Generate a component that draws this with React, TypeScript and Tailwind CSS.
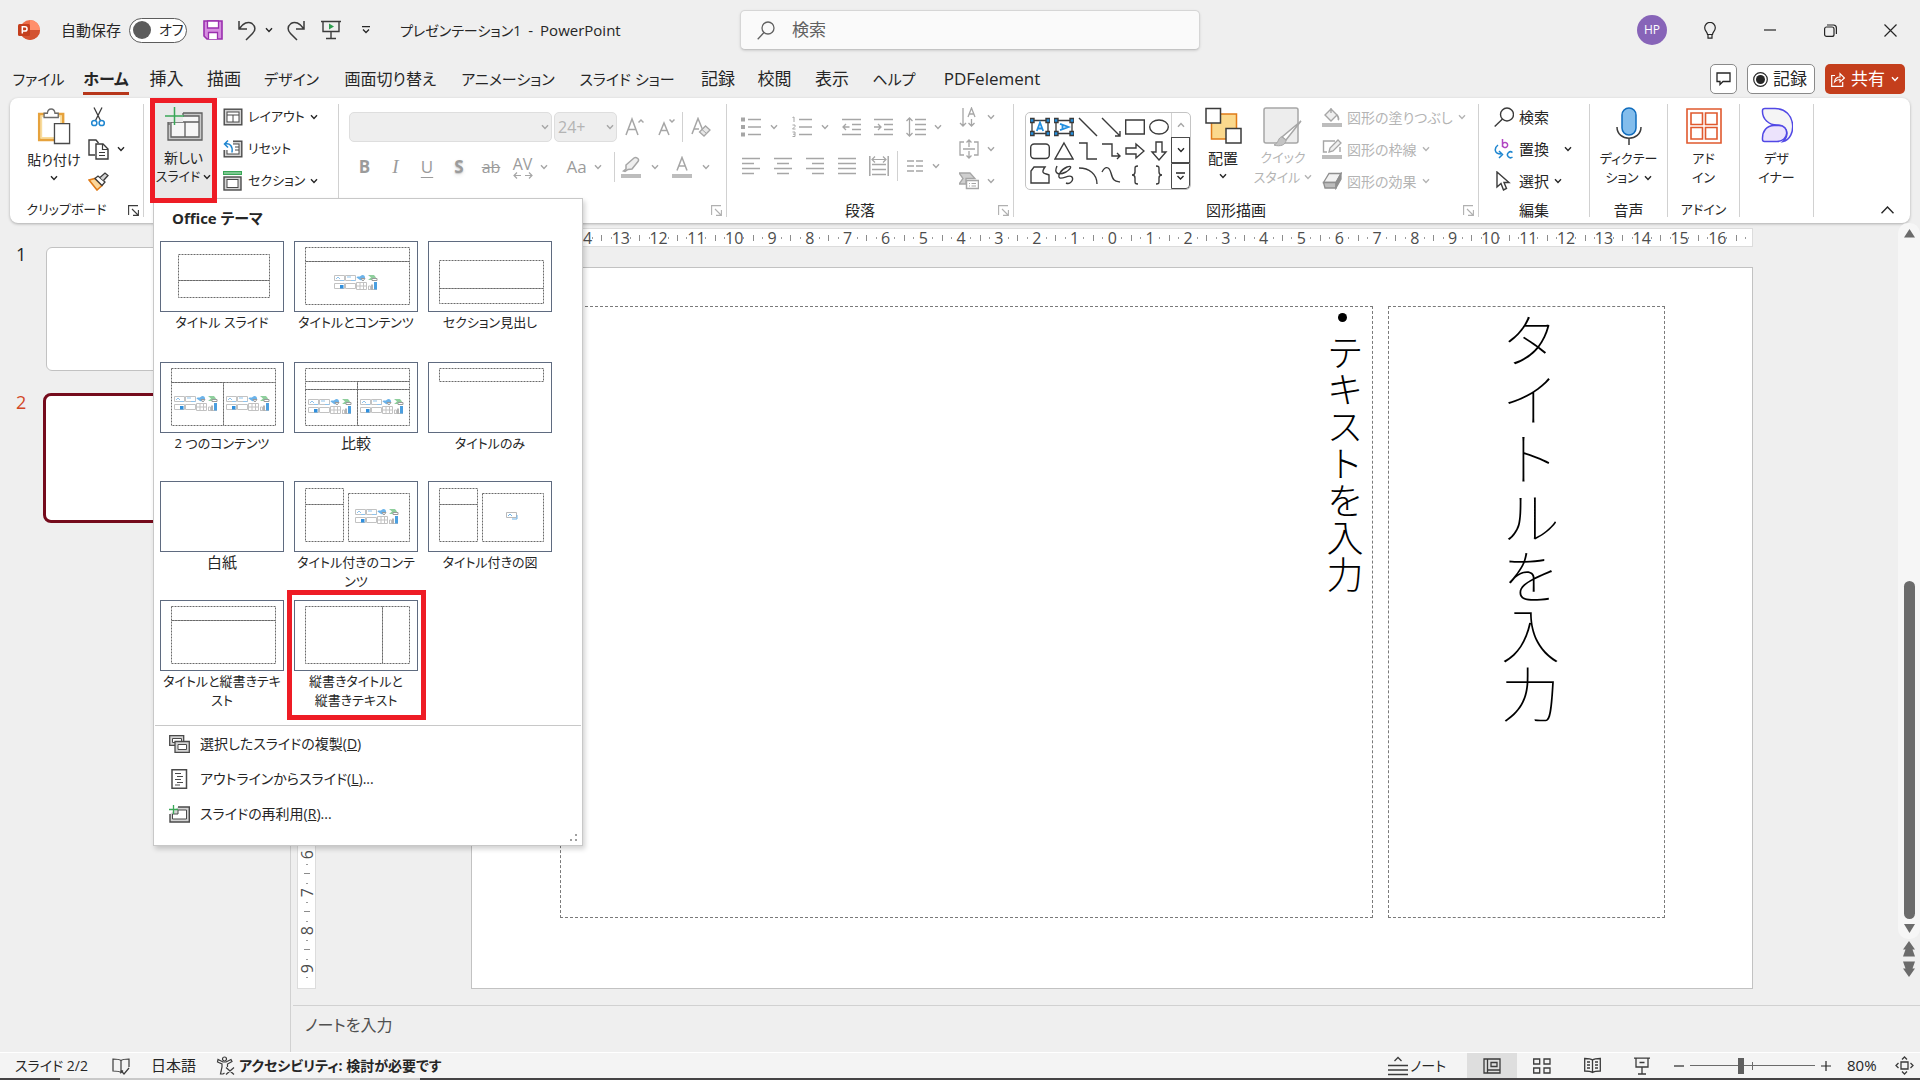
import React from "react";

type Kids = { children?: React.ReactNode };

const ink = "#3b3b3b";
const dim = "#a6a6a6";

function Icon({ w, h, vw, vh, children }: Kids & { w: number; h: number; vw?: number; vh?: number }) {
  return (
    <svg
      width={w}
      height={h}
      viewBox={`0 0 ${vw ?? w} ${vh ?? h}`}
      fill="none"
      className="shrink-0"
      aria-hidden="true"
    >
      {children}
    </svg>
  );
}

function Chevron({ color = "#262626" }: { color?: string }) {
  return (
    <Icon w={8} h={6}>
      <path d="M1 1.2 4 4.4 7 1.2" stroke={color} strokeWidth="1.4" />
    </Icon>
  );
}

/* ---------- Title bar ---------- */

function PowerPointLogo() {
  return (
    <Icon w={22} h={22}>
      <circle cx="12" cy="11" r="10" fill="#ed6c47" />
      <path d="M12 1a10 10 0 0 1 10 10H12Z" fill="#ff8f6b" />
      <path d="M2 11h20a10 10 0 0 1-20 0Z" fill="#d35230" />
      <rect x="0" y="5" width="12" height="12" rx="1.5" fill="#c43e1c" />
      <path d="M4.300 14.500V7.800h2.600a2.100 2.100 0 0 1 0 4.300H4.300" stroke="#fff" strokeWidth="1.500" />
    </Icon>
  );
}

function SaveIcon() {
  return (
    <Icon w={20} h={20}>
      <path d="M1 1h18v18H4l-3-3Z" fill="#d68ee0" stroke="#9a2fae" strokeWidth="1.600" />
      <path d="M4.500 1h11v7h-11Z" fill="#fff" stroke="#9a2fae" strokeWidth="1.300" />
      <path d="M5.500 19v-6.500h9V19" fill="#fff" stroke="#9a2fae" strokeWidth="1.300" />
    </Icon>
  );
}

function UndoIcon() {
  return (
    <Icon w={20} h={21}>
      <path d="M2 1v8h8M2.500 8.500C6 3 11 1 15 3.500c4 3 3.500 7 .5 10L9 20" stroke={ink} strokeWidth="1.500" />
    </Icon>
  );
}

function RedoIcon() {
  return (
    <Icon w={20} h={21}>
      <path d="M18 1v8h-8M17.500 8.500C14 3 9 1 5 3.500c-4 3-3.500 7-.5 10L11 20" stroke={ink} strokeWidth="1.500" />
    </Icon>
  );
}

function PresentIcon() {
  return (
    <Icon w={20} h={20}>
      <path d="M0 1.500h20M2 2v9.500h16V2M10 11.500V18M5 18.500h10" stroke={ink} strokeWidth="1.400" />
      <path d="m8 3.500 5 3-5 3Z" fill="#2e9e4f" />
    </Icon>
  );
}

function IconButton({ label, className, children }: Kids & { label: string; className: string }) {
  return (
    <button type="button" aria-label={label} className={`flex h-8 shrink-0 items-center justify-center ${className}`}>
      {children}
    </button>
  );
}

function TitleBar() {
  return (
    <header className="flex h-[60px] items-center">
      <div className="flex w-[740px] shrink-0 items-center pl-[18px]">
        <PowerPointLogo />
        <label htmlFor="autosave" className="ml-[21px] w-[60px] whitespace-nowrap">
          自動保存
        </label>
        <span className="relative ml-2 flex h-[25px] w-[58px] items-center rounded-full border border-[#5c5c5c] bg-white pl-[3px]">
          <input id="autosave" type="checkbox" className="size-[18px] appearance-none rounded-full bg-[#5c5c5c]" />
          <span className="pl-2 text-sm">オフ</span>
        </span>
        <IconButton label="上書き保存" className="ml-3 w-7">
          <SaveIcon />
        </IconButton>
        <IconButton label="元に戻す" className="ml-2 w-6">
          <UndoIcon />
        </IconButton>
        <IconButton label="元に戻すの一覧" className="ml-px w-[18px]">
          <Chevron />
        </IconButton>
        <IconButton label="やり直し" className="ml-0.5 w-8">
          <RedoIcon />
        </IconButton>
        <IconButton label="先頭から開始" className="ml-[5px] w-7">
          <PresentIcon />
        </IconButton>
        <IconButton label="クイック アクセス ツール バーのユーザー設定" className="ml-[9px] w-6">
          <Icon w={8} h={8}>
            <path d="M0 .7h8M1 3.500 4 6.500l3-3" stroke="#262626" strokeWidth="1.300" />
          </Icon>
        </IconButton>
        <h1 className="ml-[22px] flex items-center gap-[7px] whitespace-nowrap">
          <span className="text-[14px]">プレゼンテーション1</span>
          <span>-</span>
          <span>PowerPoint</span>
        </h1>
      </div>
      <label className="flex h-10 w-[460px] items-center gap-[17px] rounded-[5px] border border-[#d6d6d6] border-b-[#c4c4c4] bg-[#fafafa] pl-4 shadow-sm">
        <Icon w={18} h={19}>
          <circle cx="11" cy="7" r="6" stroke="#616161" strokeWidth="1.300" />
          <path d="M7 11.500.7 18.300" stroke="#616161" strokeWidth="1.300" />
        </Icon>
        <input
          type="search"
          aria-label="検索"
          placeholder="検索"
          className="w-full bg-transparent text-[17px] outline-none placeholder:text-[#616161]"
        />
      </label>
      <div className="ml-auto flex items-center">
        <button type="button" className="size-[30px] rounded-full bg-[#8764b8] text-xs text-white">
          HP
        </button>
        <IconButton label="ヒント" className="ml-7 w-[30px]">
          <Icon w={12} h={17}>
            <path d="M3.500 12.500c0-2.500-2.800-3.500-2.800-6.800a5.300 5.300 0 0 1 10.600 0c0 3.300-2.800 4.300-2.800 6.800ZM4 12.500v3.700h4v-3.700" stroke="#262626" strokeWidth="1.200" />
          </Icon>
        </IconButton>
        <IconButton label="最小化" className="ml-[30px] w-[30px]">
          <Icon w={12} h={2}>
            <path d="M0 1h12" stroke="#262626" strokeWidth="1.200" />
          </Icon>
        </IconButton>
        <IconButton label="元に戻す (縮小)" className="ml-[30px] w-[30px]">
          <Icon w={13} h={13}>
            <rect x=".6" y="3" width="9.400" height="9.400" rx="2" stroke="#262626" strokeWidth="1.200" />
            <path d="M3 1h6.500A3 3 0 0 1 12.400 4v6" stroke="#262626" strokeWidth="1.200" />
          </Icon>
        </IconButton>
        <IconButton label="閉じる" className="mr-[15px] ml-[30px] w-[30px]">
          <Icon w={13} h={13}>
            <path d="m.5.5 12 12M12.500.5l-12 12" stroke="#262626" strokeWidth="1.200" />
          </Icon>
        </IconButton>
      </div>
    </header>
  );
}

/* ---------- Ribbon tabs ---------- */

const tabs = [
  { name: "ファイル", width: "w-[69px] text-[15px]" },
  { name: "ホーム", width: "w-[66px] text-base" },
  { name: "挿入", width: "w-[55px] text-[17px]" },
  { name: "描画", width: "w-[60px] text-[17px]" },
  { name: "デザイン", width: "w-[75px] text-[15px]" },
  { name: "画面切り替え", width: "w-[123px] text-base" },
  { name: "アニメーション", width: "w-[112px] text-[15px]" },
  { name: "スライド ショー", width: "w-[126px] text-[15px]" },
  { name: "記録", width: "w-[56px] text-[17px]" },
  { name: "校閲", width: "w-[57px] text-[17px]" },
  { name: "表示", width: "w-[58px] text-[17px]" },
  { name: "ヘルプ", width: "w-[66px] text-[15px]" },
  { name: "PDFelement", width: "w-[130px] text-[17px]" },
];

function TabRow() {
  return (
    <nav className="flex h-[38px] items-center pl-1 text-base">
      {tabs.map((tab) =>
        tab.name === "ホーム" ? (
          <button key={tab.name} type="button" className={`flex h-full shrink-0 justify-center ${tab.width}`}>
            <span className="mt-[5px] h-[30px] border-b-[3px] border-[#b7361a] leading-7 font-bold whitespace-nowrap">
              {tab.name}
            </span>
          </button>
        ) : (
          <button key={tab.name} type="button" className={`h-full shrink-0 whitespace-nowrap ${tab.width}`}>
            {tab.name}
          </button>
        ),
      )}
      <div className="mr-[15px] ml-auto flex gap-[10px]">
        <button
          type="button"
          aria-label="コメント"
          className="flex h-[30px] w-[27px] items-center justify-center rounded-[5px] border border-[#8a8a8a] bg-white"
        >
          <Icon w={15} h={14}>
            <path d="M1 1h13v8.500H7L4 12.500v-3H1Z" stroke="#262626" strokeWidth="1.300" />
          </Icon>
        </button>
        <button
          type="button"
          className="flex h-[30px] w-[68px] items-center gap-[5px] rounded-[5px] border border-[#8a8a8a] bg-white pl-[5px] text-[17px]"
        >
          <Icon w={15} h={15}>
            <circle cx="7.500" cy="7.500" r="6.800" stroke="#262626" strokeWidth="1.200" />
            <circle cx="7.500" cy="7.500" r="4.500" fill="#262626" />
          </Icon>
          記録
        </button>
        <button
          type="button"
          className="flex h-[30px] w-20 items-center gap-[6px] rounded-[5px] bg-[#c43e1c] pl-[6px] text-[17px] text-white"
        >
          <Icon w={14} h={15}>
            <path d="M4 3.500H.7v10.800h11V10" stroke="#fff" strokeWidth="1.200" />
            <path d="M3.500 10C4 6.500 6 5 9 5V1.500L13.400 6 9 10V7.500C6.500 7.500 5 8.300 3.500 10Z" stroke="#fff" strokeWidth="1.100" />
          </Icon>
          共有
          <Chevron color="#fff" />
        </button>
      </div>
    </nav>
  );
}

/* ---------- Ribbon helpers ---------- */

function Separator() {
  return <span className="my-1.5 w-px shrink-0 bg-[#d1d1d1]" />;
}

function Launcher({ color = "#3b3b3b" }: { color?: string }) {
  return (
    <button type="button" aria-label="オプション" className="absolute right-1 bottom-[7px]">
      <Icon w={11} h={11}>
        <path d="M.6 10V.6H10M4 4l6 6M10.400 5v5.400H5" stroke={color} strokeWidth="1.100" />
      </Icon>
    </button>
  );
}

function Group({
  label,
  width,
  launcher,
  children,
}: Kids & { label?: string; width: string; launcher?: string }) {
  return (
    <section className={`relative flex shrink-0 flex-col ${width}`}>
      <div className="flex h-[99px]">{children}</div>
      <h2 className={`flex h-[26px] items-center justify-center whitespace-nowrap ${launcher ? "pr-5" : ""}`}>
        {label}
      </h2>
      {launcher && <Launcher color={launcher} />}
    </section>
  );
}

function RowButton({
  icon,
  text,
  chevron,
  disabled,
}: {
  icon: React.ReactNode;
  text: string;
  chevron?: boolean;
  disabled?: boolean;
}) {
  return (
    <button
      type="button"
      disabled={disabled}
      className="flex h-8 items-center gap-[5px] whitespace-nowrap disabled:text-[#b4b4b4]"
    >
      {icon}
      <span>{text}</span>
      {chevron && <Chevron color={disabled ? "#b4b4b4" : "#262626"} />}
    </button>
  );
}

function SlideFrame({ children }: Kids) {
  return (
    <Icon w={20} h={20}>
      <rect x="1.200" y="2.200" width="17.600" height="15.600" fill="#d4d4d4" stroke="#4a4a4a" strokeWidth="1.400" />
      <rect x="4" y="5" width="12" height="10" fill="#fff" stroke="#4a4a4a" />
      {children}
    </Icon>
  );
}

function ClipboardGroup() {
  return (
    <Group label="クリップボード" width="w-[133px] text-[13px]" launcher="#3b3b3b">
      <button type="button" className="ml-[10px] flex w-[68px] flex-col items-center pt-[9px]">
        <Icon w={34} h={39} vw={36}>
          <path d="M2.500 6.500h25v27h-25Z" fill="#fff" stroke="#e6a23c" strokeWidth="3" />
          <path d="M4.500 8.500h21v23h-21Z" fill="#fff" stroke="#f8dc9c" strokeWidth="2" />
          <path d="M7.500 10V5.500H11c.5-6 7.500-6 8 0h3.500V10Z" fill="#fff" stroke="#6b6b6b" strokeWidth="1.400" />
          <path d="M18.500 16.500h16v21h-16Z" fill="#fff" stroke="#4a4a4a" strokeWidth="1.400" />
        </Icon>
        <span className="pt-0.5 text-[14px] leading-6 whitespace-nowrap">貼り付け</span>
        <span className="pt-[3px]">
          <Chevron />
        </span>
      </button>
      <div className="flex flex-col pt-[3px]">
        <IconButton label="切り取り" className="w-5">
          <Icon w={14} h={20}>
            <path d="M3 .5 9.500 13.500M11 .5 4.500 13.500" stroke={ink} strokeWidth="1.300" />
            <circle cx="3.300" cy="16" r="2.600" stroke="#1f86d0" strokeWidth="1.500" />
            <circle cx="10.700" cy="16" r="2.600" stroke="#1f86d0" strokeWidth="1.500" />
          </Icon>
        </IconButton>
        <div className="flex gap-[7px]">
          <IconButton label="コピー" className="w-5">
            <Icon w={21} h={21}>
              <path d="M7 16H1V1h7l2.500 3" stroke={ink} strokeWidth="1.400" />
              <path d="M8 5h7l5 5v10H8Z" fill="#fff" stroke={ink} strokeWidth="1.400" />
              <path d="M14.500 5v5.500H20M11 13.500h6M11 16.500h6" stroke={ink} strokeWidth="1.200" />
            </Icon>
          </IconButton>
          <IconButton label="コピーの種類" className="w-3">
            <Chevron />
          </IconButton>
        </div>
        <IconButton label="書式のコピー/貼り付け" className="w-5">
          <Icon w={21} h={19}>
            <path d="m1 8 6-1.500 7 7L9 18Z" fill="#fbd79b" stroke="#e07b18" strokeWidth="1.600" />
            <path d="m7 6.500 3-2.500 7 6-3 3.500Z" fill="#fff" stroke={ink} strokeWidth="1.300" />
            <path d="m12 5.500 5-4.500 3 2.500L15.500 8.500" fill="#d4d4d4" stroke={ink} strokeWidth="1.300" />
          </Icon>
        </IconButton>
      </div>
    </Group>
  );
}

/* ---------- New slide menu ---------- */

type Rect = [number, number, number, number];

function ContentGlyphs({ x, y }: { x: number; y: number }) {
  return (
    <g transform={`translate(${x} ${y})`} strokeWidth="1">
      <g stroke="#c2c2c2">
        <path d="M.5 1.500h10v5h-10ZM11.500 1.500h10v5h-10ZM11.500 9.500h10v5h-10ZM.5 9.500h10v5h-10ZM22.500 8.500h10v7h-10ZM26 8.500v7M29.500 8.500v7M22.500 12h10" fill="#fff" />
        <path d="M34.500 15v-3h2v3M34 15.500h9" />
      </g>
      <path d="m2 5 2-2 2 2M17 6.500h4.500M6 6.500h4M13 3h4" stroke="#8fc3ec" />
      <path d="M22.500 3.500c1-2 3 0 4-1.500 2-2 4-1 4.500 1s-3 4-5 3Z" fill="#6bb3ea" />
      <path d="M27 4.500h4l-2 2.500Z" fill="#fff" stroke="#9a9a9a" />
      <path d="m34 1 3 2.500L34 6h6l2-2.500L40 1Z" fill="#8fcf9d" />
      <path d="M38 4.500h5v2h-5Z" fill="#fff" stroke="#9a9a9a" />
      <rect x="6" y="11" width="3.500" height="3.500" fill="#2f8fdd" />
      <path d="M38 10.500v5" stroke="#9a9a9a" strokeWidth="1.500" />
      <path d="M41.500 8v7.500" stroke="#4b9fe0" strokeWidth="3" />
    </g>
  );
}

const layouts: {
  name: React.ReactNode;
  id: string;
  rects: Rect[];
  glyphs?: [number, number][];
  picture?: boolean;
  marked?: boolean;
  kanji?: boolean;
}[] = [
  { id: "title", name: "タイトル スライド", rects: [[18, 13, 91, 26], [18, 39, 91, 17]] },
  { id: "content", name: "タイトルとコンテンツ", rects: [[11, 6, 104, 14], [11, 20, 104, 43]], glyphs: [[40, 33]] },
  { id: "section", name: "セクション見出し", rects: [[11, 19, 104, 28], [11, 47, 104, 15]] },
  {
    id: "two",
    name: "2 つのコンテンツ",
    rects: [[11, 6, 104, 14], [11, 20, 52, 43], [63, 20, 52, 43]],
    glyphs: [[14, 33], [66, 33]],
  },
  {
    id: "compare",
    name: "比較",
    kanji: true,
    rects: [[11, 6, 104, 13], [11, 19, 52, 8], [63, 19, 52, 8], [11, 27, 52, 36], [63, 27, 52, 36]],
    glyphs: [[14, 36], [66, 36]],
  },
  { id: "titleonly", name: "タイトルのみ", rects: [[11, 6, 104, 13]] },
  { id: "blank", name: "白紙", kanji: true, rects: [] },
  {
    id: "caption",
    name: (
      <>
        タイトル付きのコンテ
        <br />
        ンツ
      </>
    ),
    rects: [[11, 7, 38, 16], [11, 23, 38, 37], [54, 12, 61, 48]],
    glyphs: [[61, 27]],
  },
  {
    id: "picture",
    name: "タイトル付きの図",
    rects: [[11, 7, 38, 16], [11, 23, 38, 37], [54, 12, 61, 48]],
    picture: true,
  },
  {
    id: "vtext",
    name: (
      <>
        タイトルと縦書きテキ
        <br />
        スト
      </>
    ),
    rects: [[11, 6, 104, 14], [11, 20, 104, 43]],
  },
  {
    id: "vtitle",
    name: (
      <>
        縦書きタイトルと
        <br />
        縦書きテキスト
      </>
    ),
    rects: [[11, 6, 77, 57], [88, 6, 27, 57]],
    marked: true,
  },
];

function NewSlideMenu() {
  return (
    <div className="absolute top-[100px] left-[3px] z-10 w-[430px] border border-[#c8c8c8] bg-white pt-[6px] text-left shadow-[2px_3px_5px_rgba(0,0,0,0.18)]">
      <h3 className="pl-[18px] leading-[26px] font-bold">Office テーマ</h3>
      <div className="mt-[10px] ml-[6px] grid grid-cols-[124px_124px_124px] grid-rows-[121px_119px_119px_125px] gap-x-[10px]">
        {layouts.map((l) => (
          <button key={l.id} type="button" className="relative flex flex-col items-center">
            <svg width="124" height="71" viewBox="1 1 122 69" fill="none" className="border border-[#5f6b80]" aria-hidden="true">
              {l.rects.map(([x, y, w, h]) => (
                <rect
                  key={`${x}-${y}`}
                  x={x + 0.5}
                  y={y + 0.5}
                  width={w}
                  height={h}
                  stroke="#6a6a6a"
                  strokeDasharray="2 1"
                />
              ))}
              {l.glyphs?.map(([x, y]) => (
                <ContentGlyphs key={x} x={x} y={y} />
              ))}
              {l.picture && (
                <g>
                  <path d="M78.500 31.500h10v5h-10Z" stroke="#b9b9b9" />
                  <path d="m80 35 2-2 2 2M84 38h5v-4" stroke="#6fb1e6" />
                </g>
              )}
            </svg>
            <span className={`pt-px leading-[19px] whitespace-nowrap ${l.kanji ? "text-[15px]" : "text-[13px]"}`}>
              {l.name}
            </span>
            {l.marked && <span className="absolute -top-[10px] -right-2 -left-[7px] h-[130px] border-[5px] border-[#ee1c25]" />}
          </button>
        ))}
      </div>
      <ul className="mx-px border-t border-[#c8c8c8] pb-[14px] text-[14px]">
        <li>
          <button type="button" className="flex h-[35px] items-center gap-[10px] pl-[14px]">
            <Icon w={21} h={18}>
              <path d="M.7.7h14v9.600h-14Z" fill="#d4d4d4" stroke="#4a4a4a" strokeWidth="1.300" />
              <path d="M3.500 3.500h9v4h-9Z" fill="#fff" stroke="#4a4a4a" />
              <path d="M6 6.500h14.300v11H6Z" fill="#d4d4d4" stroke="#4a4a4a" strokeWidth="1.300" />
              <path d="M9 9.500h8.500v5H9Z" fill="#fff" stroke="#4a4a4a" />
            </Icon>
            <span>
              選択したスライドの複製(<u>D</u>)
            </span>
          </button>
        </li>
        <li>
          <button type="button" className="flex h-[35px] items-center gap-[10px] pl-[14px]">
            <Icon w={21} h={20}>
              <path d="M3 .8h14.500v18.400H3Z" fill="#fff" stroke="#4a4a4a" strokeWidth="1.500" />
              <path d="M6 4.500h6M8 7.500h6M6 10.500h6M8 13.500h6M6 16h5" stroke="#4a4a4a" />
            </Icon>
            <span>
              アウトラインからスライド(<u>L</u>)...
            </span>
          </button>
        </li>
        <li>
          <button type="button" className="flex h-[35px] items-center gap-[10px] pl-[14px]">
            <Icon w={21} h={18}>
              <path d="M9 2h11.300v15H1V9" fill="#d4d4d4" stroke="#4a4a4a" strokeWidth="1.400" />
              <path d="M9 5h8.500v9h-14V9H9Z" fill="#fff" stroke="#4a4a4a" />
              <path d="M4.500 0v9M0 4.500h9" stroke="#3aa757" strokeWidth="1.300" />
            </Icon>
            <span>
              スライドの再利用(<u>R</u>)...
            </span>
          </button>
        </li>
      </ul>
      <span className="absolute right-1 bottom-[3px]">
        <Icon w={8} h={8}>
          <path d="M5 0h2v2H5ZM0 5h2v2H0ZM5 5h2v2H5Z" fill="#a0a0a0" />
        </Icon>
      </span>
    </div>
  );
}

function SlidesGroup() {
  return (
    <Group width="w-[194px]">
      <div className="relative ml-[6px] w-[67px]">
        <button
          type="button"
          aria-expanded="true"
          className="relative z-20 flex h-[105px] w-[67px] flex-col items-center border-[5px] border-[#ee1c25] bg-[#e9e9e9] pt-[3px]"
        >
          <Icon w={38} h={36}>
            <path d="M3 7h34v27H3Z" fill="#c9c9c9" stroke="#5f5f5f" strokeWidth="1.300" />
            <path d="M6 10h28v21H6ZM6 16h28M20 16v15" fill="#f6f6f6" stroke="#5f5f5f" strokeWidth="1.300" />
            <path d="M0 0h18v16H0Z" fill="#e9e9e9" />
            <path d="M4 16v3M18 7v2" stroke="#5f5f5f" strokeWidth="1.300" />
            <path d="M9.500 1v18M0 10h19" stroke="#3aa757" strokeWidth="1.500" />
          </Icon>
          <span className="pt-[6px] text-[14px] leading-[19px] whitespace-nowrap">新しい</span>
          <span className="flex items-center gap-[3px] text-[13px] leading-[19px] whitespace-nowrap">
            スライド
            <Chevron />
          </span>
        </button>
        <NewSlideMenu />
      </div>
      <div className="ml-[6px] flex flex-col pt-[3px] text-[13px]">
        <RowButton
          icon={
            <SlideFrame>
              <path d="M4 8h12M10 8v7" stroke="#4a4a4a" />
            </SlideFrame>
          }
          text="レイアウト"
          chevron
        />
        <RowButton
          icon={
            <SlideFrame>
              <path d="M0 0h10v11H0Z" fill="#fff" />
              <path d="M9 13.500C10 7 7 4 2 5M5 1.500 1.500 5 5 8.500" stroke="#1f86d0" strokeWidth="1.500" />
              <path d="M12 8h4M12 11h4" stroke="#4a4a4a" />
            </SlideFrame>
          }
          text="リセット"
        />
        <RowButton
          icon={
            <Icon w={20} h={20}>
              <rect x=".5" y=".5" width="18" height="3" fill="#7cc790" stroke="#3aa757" />
              <rect x="1" y="6" width="17" height="13" fill="#d4d4d4" stroke="#4a4a4a" strokeWidth="1.400" />
              <rect x="4" y="8.500" width="11" height="8" fill="#fff" stroke="#4a4a4a" />
            </Icon>
          }
          text="セクション"
          chevron
        />
      </div>
    </Group>
  );
}

/* ---------- Font group ---------- */

function FontGroup() {
  return (
    <Group width="w-[387px]" launcher="#b0b0b0">
      <div className="flex flex-col pt-[14px] pl-[10px] text-[#9b9b9b]">
        <div className="flex h-[30px] items-center">
          <span className="relative flex items-center">
            <select aria-label="フォント" disabled className="h-[30px] w-[203px] appearance-none rounded-[5px] border border-[#dedede] bg-[#eeeeee]" />
            <span className="absolute right-[3px]">
              <Chevron color={dim} />
            </span>
          </span>
          <span className="relative ml-0.5 flex items-center">
            <select
              aria-label="フォント サイズ"
              disabled
              className="h-[30px] w-[63px] appearance-none rounded-[5px] border border-[#dedede] bg-[#eeeeee] pl-[3px] text-base text-[#b4b4b4] opacity-100"
            >
              <option>24+</option>
            </select>
            <span className="absolute right-[3px]">
              <Chevron color={dim} />
            </span>
          </span>
          <IconButton label="フォント サイズの拡大" className="ml-1 w-[26px]">
            <Icon w={19} h={20}>
              <path d="m1 18 6-16 6 16M3.200 12.500h7.600M13.500 5.500 16 3l2.500 2.500" stroke={dim} strokeWidth="1.500" />
            </Icon>
          </IconButton>
          <IconButton label="フォント サイズの縮小" className="ml-[6px] w-[26px]">
            <Icon w={17} h={20}>
              <path d="m1 18 5-12 5 12M3 13.500h6M11.500 2.500 14 5l2.500-2.500" stroke={dim} strokeWidth="1.500" />
            </Icon>
          </IconButton>
          <span className="ml-[3px] h-[30px] w-px bg-[#d1d1d1]" />
          <IconButton label="すべての書式をクリア" className="ml-1 w-7">
            <Icon w={20} h={20}>
              <path d="M1 17 7 1.500l4.500 11M3.200 12H8" stroke={dim} strokeWidth="1.500" />
              <path d="m8.500 15 6-6 4.500 4-6 6Z" fill="#e8e8e8" stroke={dim} strokeWidth="1.300" />
              <path d="m11 12.500 4.500 4" stroke={dim} />
            </Icon>
          </IconButton>
        </div>
        <div className="mt-[10px] flex h-[30px] items-center text-[17px]">
          <button type="button" aria-label="太字" className="w-[31px] font-bold">
            B
          </button>
          <button type="button" aria-label="斜体" className="w-[31px] font-['Liberation_Serif',serif] text-[19px] italic">
            I
          </button>
          <button type="button" aria-label="下線" className="w-8 underline underline-offset-4">
            U
          </button>
          <button type="button" aria-label="影" className="w-8 font-bold text-shadow-md">
            S
          </button>
          <button type="button" aria-label="取り消し線" className="w-8 text-base line-through">
            ab
          </button>
          <IconButton label="文字の間隔" className="ml-[5px] w-9 gap-[7px]">
            <span className="flex flex-col items-center">
              <span className="text-base leading-4">AV</span>
              <Icon w={20} h={7}>
                <path d="M1 3.500h7M4 .5l-3 3 3 3M12 3.500h7M16 .5l3 3-3 3" stroke={dim} strokeWidth="1.200" />
              </Icon>
            </span>
            <Chevron color={dim} />
          </IconButton>
          <IconButton label="文字種の変換" className="ml-[18px] w-9 gap-[7px]">
            <span className="text-[17px]">Aa</span>
            <Chevron color={dim} />
          </IconButton>
          <span className="ml-[12px] h-[30px] w-px bg-[#d1d1d1]" />
          <IconButton label="蛍光ペンの色" className="ml-[7px] w-9 gap-[10px]">
            <Icon w={20} h={22}>
              <path d="m5 9 8-7c2-1.500 6 1 4 3.500L11 13l-4 .500-3 2-1.500-.500L5 13Z" fill="#efefef" stroke={dim} strokeWidth="1.500" />
              <path d="M0 18h20v4H0Z" fill="#bdbdbd" />
            </Icon>
            <Chevron color={dim} />
          </IconButton>
          <IconButton label="フォントの色" className="ml-[15px] w-9 gap-[10px]">
            <Icon w={20} h={22}>
              <path d="m5 14.500 5-13 5 13M6.800 10h6.400" stroke={dim} strokeWidth="1.500" />
              <path d="M0 18h20v4H0Z" fill="#bdbdbd" />
            </Icon>
            <Chevron color={dim} />
          </IconButton>
        </div>
      </div>
    </Group>
  );
}

/* ---------- Paragraph group ---------- */

function Lines({ d, extra }: { d: string; extra?: React.ReactNode }) {
  return (
    <Icon w={20} h={22}>
      <path d={d} stroke={dim} strokeWidth="1.500" />
      {extra}
    </Icon>
  );
}

function ParagraphGroup() {
  const dots = <path d="M0 1.500h4v4H0ZM0 9h4v4H0ZM0 16.500h4v4H0Z" fill={dim} />;
  return (
    <Group label="段落" width="w-[286px]" launcher="#b0b0b0">
      <div className="flex w-[224px] flex-col pt-[14px] pl-[14px]">
        <div className="flex h-[30px] items-center">
          <IconButton label="箇条書き" className="w-[37px] gap-[9px]">
            <Lines d="M7 3.500h13M7 11h13M7 18.500h13" extra={dots} />
            <Chevron color={dim} />
          </IconButton>
          <IconButton label="段落番号" className="ml-[14px] w-[37px] gap-[9px]">
            <Lines
              d="M7 3.500h13M7 11h13M7 18.500h13"
              extra={<path d="M.5 1.500 2 1v5M.5 9h2.500v1.500l-2.500 2.500H3.500M.5 16H3v4.500H.5M1 18.200h2" stroke={dim} />}
            />
            <Chevron color={dim} />
          </IconButton>
          <IconButton label="インデントを減らす" className="ml-[13px] w-5">
            <Lines d="M0 3.500h19M10 8.500h9M10 13.500h9M0 18.500h19" extra={<path d="M7.500 11H1M4 8l-3 3 3 3" stroke={dim} strokeWidth="1.300" />} />
          </IconButton>
          <IconButton label="インデントを増やす" className="ml-3 w-5">
            <Lines d="M0 3.500h19M10 8.500h9M10 13.500h9M0 18.500h19" extra={<path d="M0 11h7M4 8l3 3-3 3" stroke={dim} strokeWidth="1.300" />} />
          </IconButton>
          <IconButton label="行間" className="ml-[13px] w-[34px] gap-[8px]">
            <Lines
              d="M9 3.500h11M9 8.500h11M9 13.500h11M9 18.500h11"
              extra={<path d="M3.500 2v18M.5 5l3-3 3 3M.5 17l3 3 3-3" stroke={dim} strokeWidth="1.300" />}
            />
            <Chevron color={dim} />
          </IconButton>
        </div>
        <div className="mt-[9px] flex h-[30px] items-center gap-3">
          <IconButton label="左揃え" className="w-5">
            <Lines d="M1 3.500h18M1 8.500h12M1 13.500h18M1 18.500h12" />
          </IconButton>
          <IconButton label="中央揃え" className="w-5">
            <Lines d="M1 3.500h18M4 8.500h12M1 13.500h18M4 18.500h12" />
          </IconButton>
          <IconButton label="右揃え" className="w-5">
            <Lines d="M1 3.500h18M7 8.500h12M1 13.500h18M7 18.500h12" />
          </IconButton>
          <IconButton label="両端揃え" className="w-5">
            <Lines d="M1 3.500h18M1 8.500h18M1 13.500h18M1 18.500h18" />
          </IconButton>
          <IconButton label="均等割り付け" className="w-5">
            <Lines d="M3 9.500h14M3 14.500h14M3 19.500h14M.8 1v20M19.200 1v20" extra={<path d="M3 4.500h14M6 1.500l-3 3 3 3M14 1.500l3 3-3 3" stroke={dim} strokeWidth="1.200" />} />
          </IconButton>
          <span className="-ml-1 h-[30px] w-px bg-[#d1d1d1]" />
          <IconButton label="段組み" className="-ml-1 w-[34px] gap-[9px]">
            <Icon w={16} h={12}>
              <path d="M0 1h7M9 1h7M0 6h7M9 6h7M0 11h7M9 11h7" stroke={dim} strokeWidth="1.300" />
            </Icon>
            <Chevron color={dim} />
          </IconButton>
        </div>
      </div>
      <div className="flex flex-col pt-[3px] pl-2">
        <IconButton label="文字列の方向" className="w-9 gap-2">
          <Icon w={20} h={20}>
            <path d="M4 1v18M1 16l3 3 3-3M12.500 12v7M9.500 16l3 3 3-3M9 10l3.500-9 3.500 9M10.300 7h4.400" stroke={dim} strokeWidth="1.300" />
          </Icon>
          <Chevron color={dim} />
        </IconButton>
        <IconButton label="文字の配置" className="w-9 gap-2">
          <Icon w={20} h={20}>
            <path d="M5 3H1v13h4M15 3h4v13h-4M4 10h12M10 1v7M7.500 3.500 10 1l2.500 2.500M10 12v7M7.500 16.500 10 19l2.500-2.500" stroke={dim} strokeWidth="1.300" />
          </Icon>
          <Chevron color={dim} />
        </IconButton>
        <IconButton label="SmartArt に変換" className="w-9 gap-2">
          <Icon w={20} h={18}>
            <path d="M0 1h11l5 5.500H7V12H0l4-5.500Z" fill="#cfcfcf" stroke={dim} strokeWidth="1.300" />
            <path d="M7.500 8.500h12v8h-12Z" fill="#fff" stroke={dim} strokeWidth="1.500" />
            <path d="M10 11.500h1M12.500 11.500H17M10 14h1M12.500 14H17" stroke={dim} />
          </Icon>
          <Chevron color={dim} />
        </IconButton>
      </div>
    </Group>
  );
}

/* ---------- Drawing group ---------- */

const shapes: { name: string; draw: React.ReactNode }[] = [
  {
    name: "テキスト ボックス",
    draw: (
      <>
        <path d="M2 3.500h16v13H2Z" stroke={ink} strokeWidth="1.300" />
        <path d="M0 1.500h4v4H0ZM16 1.500h4v4h-4ZM0 14.500h4v4H0ZM16 14.500h4v4h-4Z" fill="#2490e0" />
        <path d="m6.800 14 3.200-8.500 3.200 8.500M8 11.500h4" stroke="#2490e0" strokeWidth="1.800" />
      </>
    ),
  },
  {
    name: "縦書きテキスト ボックス",
    draw: (
      <>
        <path d="M2 3.500h16v13H2Z" stroke={ink} strokeWidth="1.300" />
        <path d="M0 1.500h4v4H0ZM16 1.500h4v4h-4ZM0 14.500h4v4H0ZM16 14.500h4v4h-4Z" fill="#2490e0" />
        <path d="m6 6.800 8.500 3.200-8.500 3.200M8.500 8v4" stroke="#2490e0" strokeWidth="1.800" />
      </>
    ),
  },
  { name: "線", draw: <path d="m1 1 18 18" /> },
  { name: "線矢印", draw: <path d="m1 1 18 18M19 14v5h-5" /> },
  { name: "正方形/長方形", draw: <path d="M.7 3h18.600v14H.7Z" /> },
  { name: "楕円", draw: <ellipse cx="10" cy="10" rx="9.300" ry="7" /> },
  { name: "四角形: 角を丸くする", draw: <rect x=".7" y="3" width="18.600" height="14.500" rx="3.500" /> },
  { name: "二等辺三角形", draw: <path d="M10 2 19 18H1Z" /> },
  { name: "コネクタ: カギ線", draw: <path d="M1 2h8v16h10" /> },
  { name: "コネクタ: カギ線矢印", draw: <path d="M1 3h10v12h8M16 12l3 3-3 3" /> },
  { name: "矢印: 右", draw: <path d="M1 7h10V3l8 7-8 7v-4H1Z" /> },
  { name: "矢印: 下", draw: <path d="M7 1h6v10h4l-7 8-7-8h4Z" /> },
  { name: "フリーフォーム", draw: <path d="M4 2h11c-5 7 0 6 4 8v8H1V6Z" /> },
  { name: "フリーハンド", draw: <path d="M3 1C-1 10 6 10 12 7c6-4 6-7 1-5C6 5 3 12 6 13c4 1 9-4 12-1 2 3-2 8-6 6" /> },
  { name: "円弧", draw: <path d="M1 3c10 0 18 6 18 16" /> },
  { name: "曲線", draw: <path d="M1 7C4 1 8 1 10 8c2 8 4 8 9 9" /> },
  { name: "左中かっこ", draw: <path d="M13 1c-3 0-3 1-3 3v3c0 2-1 3-3 3 2 0 3 1 3 3v3c0 2 0 3 3 3" /> },
  { name: "右中かっこ", draw: <path d="M7 1c3 0 3 1 3 3v3c0 2 1 3 3 3-2 0-3 1-3 3v3c0 2 0 3-3 3" /> },
];

function DrawingGroup() {
  return (
    <Group label="図形描画" width="w-[464px]" launcher="#b0b0b0">
      <div className="mt-[14px] ml-[11px] flex h-[78px] w-[166px] overflow-hidden rounded-[5px] border border-[#c4c4c4]">
        <div className="grid grow grid-cols-6 content-center gap-y-1 pl-0.5">
          {shapes.map((s) => (
            <button key={s.name} type="button" aria-label={s.name} className="flex justify-center">
              <Icon w={20} h={20}>
                <g stroke={ink} strokeWidth="1.400">
                  {s.draw}
                </g>
              </Icon>
            </button>
          ))}
        </div>
        <div className="flex w-[19px] flex-col">
          <button type="button" aria-label="前の行" className="flex flex-1 items-center justify-center border-l border-[#d1d1d1]">
            <span className="rotate-180">
              <Chevron color={dim} />
            </span>
          </button>
          <button type="button" aria-label="次の行" className="flex flex-1 items-center justify-center border border-[#4a4a4a]">
            <Chevron />
          </button>
          <button type="button" aria-label="図形" className="flex flex-1 items-center justify-center rounded-br-[4px] border border-[#4a4a4a]">
            <Icon w={9} h={9}>
              <path d="M0 1h9M1.500 4l3 3 3-3" stroke="#262626" strokeWidth="1.400" />
            </Icon>
          </button>
        </div>
      </div>
      <button type="button" className="ml-[7px] flex w-[50px] flex-col items-center pt-[9px]">
        <Icon w={37} h={38}>
          <path d="M6.500 7h25v25h-25Z" fill="#fbd98d" stroke="#e07b18" strokeWidth="1.500" />
          <path d="M1 1.500h14.500V16H1ZM21 21.500h15V36H21Z" fill="#fff" stroke={ink} strokeWidth="1.500" />
        </Icon>
        <span className="pt-0.5 leading-[22px]">配置</span>
        <span className="pt-1">
          <Chevron />
        </span>
      </button>
      <button type="button" disabled className="ml-0.5 flex w-[66px] flex-col items-center pt-[9px] text-[13px] text-[#b4b4b4]">
        <Icon w={40} h={40}>
          <rect x="1" y="1" width="34" height="35" rx="2" fill="#ededed" stroke={dim} strokeWidth="1.500" />
          <path d="m38 14-15 19-4-3Z" fill="#fff" stroke={dim} strokeWidth="1.500" />
          <path d="M19 30c-4 0-3 6-8 8 6 2 12 0 12-5Z" fill="#c4c4c4" stroke={dim} />
        </Icon>
        <span className="leading-[21px]">クイック</span>
        <span className="flex items-center gap-1 leading-[18px] whitespace-nowrap">
          スタイル
          <Chevron color="#b4b4b4" />
        </span>
      </button>
      <div className="flex flex-col pt-[3px] pl-[6px] text-[14px]">
        <RowButton
          disabled
          chevron
          text="図形の塗りつぶし"
          icon={
            <Icon w={20} h={20}>
              <path d="m9 2 6 6-6 6-6-6ZM9 6V1" fill="#efefef" stroke={dim} strokeWidth="1.400" />
              <path d="M15 8c2 3 2 4 1 5" stroke={dim} strokeWidth="1.800" />
              <path d="M0 16h20v4H0Z" fill="#bdbdbd" />
            </Icon>
          }
        />
        <RowButton
          disabled
          chevron
          text="図形の枠線"
          icon={
            <Icon w={20} h={20}>
              <path d="M13 2H1.500v11H5M18 8v5" stroke={dim} strokeWidth="1.400" />
              <path d="m7 13 1-4 8-8 3 3-8 8Z" fill="#efefef" stroke={dim} strokeWidth="1.300" />
              <path d="M0 16h20v4H0Z" fill="#bdbdbd" />
            </Icon>
          }
        />
        <RowButton
          disabled
          chevron
          text="図形の効果"
          icon={
            <Icon w={20} h={18}>
              <path d="M7 1.500h12l-5 9H1.500Z" fill="#f2f2f2" stroke="#8f8f8f" strokeWidth="1.300" />
              <path d="M1.500 10.500H14V16H3Z" fill="#bdbdbd" stroke="#8f8f8f" strokeWidth="1.300" />
              <path d="m14 16 5-9V1.500l-5 9Z" fill="#8f8f8f" stroke="#8f8f8f" strokeWidth="1.300" />
            </Icon>
          }
        />
      </div>
    </Group>
  );
}

/* ---------- Remaining groups ---------- */

function EditingGroup() {
  return (
    <Group label="編集" width="w-[110px]">
      <div className="flex flex-col pt-[3px] pl-[15px]">
        <RowButton
          text="検索"
          icon={
            <Icon w={20} h={20}>
              <circle cx="13" cy="7.500" r="6.500" stroke={ink} strokeWidth="1.400" />
              <path d="M8.500 12 .7 19.500" stroke={ink} strokeWidth="1.400" />
            </Icon>
          }
        />
        <div className="flex items-center gap-[15px]">
          <RowButton
            text="置換"
            icon={
              <Icon w={20} h={20}>
                <path d="M8.500 0v8M8.500 5.500a2.600 2.600 0 1 1 0 1" stroke="#b146c2" strokeWidth="1.500" />
                <path d="M18.500 13.500a3 3 0 1 0 0 4.500" stroke="#1f86d0" strokeWidth="1.500" />
                <path d="M4 6c-4 3-4 9 3 9M5 12l3.500 3.500L5 19" stroke="#1f86d0" strokeWidth="1.500" />
              </Icon>
            }
          />
          <Chevron />
        </div>
        <RowButton
          chevron
          text="選択"
          icon={
            <Icon w={20} h={20}>
              <path d="M3 1v15l4-3.500L9.500 19l3-1.500L10 11.500h5Z" stroke={ink} strokeWidth="1.400" />
            </Icon>
          }
        />
      </div>
    </Group>
  );
}

function BigButton({ icon, lines, chevron }: { icon: React.ReactNode; lines: [string, string]; chevron?: boolean }) {
  return (
    <button type="button" className="flex w-full flex-col items-center pt-[9px] text-[13px] whitespace-nowrap">
      {icon}
      <span className="pt-[3px] leading-5">{lines[0]}</span>
      <span className="flex items-center gap-[5px] leading-[19px]">
        {lines[1]}
        {chevron && <Chevron />}
      </span>
    </button>
  );
}

function Ribbon() {
  return (
    <div className="mx-[10px] flex h-[125px] rounded-lg bg-white shadow-[0_1px_3px_rgba(0,0,0,0.28)]">
      <ClipboardGroup />
      <Separator />
      <SlidesGroup />
      <Separator />
      <FontGroup />
      <Separator />
      <ParagraphGroup />
      <Separator />
      <DrawingGroup />
      <Separator />
      <EditingGroup />
      <Separator />
      <Group label="音声" width="w-[77px]">
        <BigButton
          chevron
          lines={["ディクテー", "ション"]}
          icon={
            <Icon w={26} h={38}>
              <rect x="6" y="1" width="14" height="27" rx="7" fill="#83bdec" stroke="#0f6cbd" strokeWidth="1.500" />
              <path d="M1 20c0 15 24 15 24 0M13 31v7" stroke={ink} strokeWidth="1.500" />
            </Icon>
          }
        />
      </Group>
      <Separator />
      <Group label="アドイン" width="w-[71px] text-[13px]">
        <BigButton
          lines={["アド", "イン"]}
          icon={
            <Icon w={36} h={38}>
              <g stroke="#e0592e" strokeWidth="1.600">
                <path d="M1 2h34v34H1Z" fill="#fff" />
                <path d="M5 6h11.500v11.500H5ZM19.500 6H31v11.500H19.500ZM5 20.500h11.500V32H5ZM19.500 20.500H31V32H19.500Z" />
              </g>
            </Icon>
          }
        />
      </Group>
      <Separator />
      <Group width="w-[73px]">
        <BigButton
          lines={["デザ", "イナー"]}
          icon={
            <Icon w={32} h={38}>
              <g stroke="#5148e5" strokeWidth="1.500">
                <path d="M4 1.500h10c22 0 22 30 8 33C29 28 26 18 16 18 8 18 1 12 1.500 3.500c0-1.300 1-2 2.500-2Z" fill="#f5f5f5" />
                <path d="M3.500 34.500C2 34.500 1.500 34 1.500 32.500 1 24 6 18.500 13 18.500h5c11 0 10 16-2 16Z" fill="#ece3fc" />
              </g>
            </Icon>
          }
        />
      </Group>
      <Separator />
      <button type="button" aria-label="リボンを折りたたむ" className="mt-auto mr-4 mb-[9px] ml-auto">
        <Icon w={13} h={8}>
          <path d="M.5 7.200 6.500 1l6 6.200" stroke="#262626" strokeWidth="1.400" />
        </Icon>
      </button>
    </div>
  );
}

/* ---------- Workspace ---------- */

const hMarks = Array.from({ length: 135 }, (_, i) => i - 67);
const vMarks = Array.from({ length: 75 }, (_, i) => i - 37);

function HorizontalRuler() {
  return (
    <div className="mt-[5px] mr-[167px] ml-[180px] flex h-[19px] border border-[#dcdcdc] bg-white text-base leading-4 text-[#4d4d4d]">
      <span className="w-0 grow-[24] basis-0" />
      {hMarks.map((m) => (
        <span key={m} className="flex w-0 min-w-0 grow-[100] basis-0 items-center justify-center">
          {m % 4 === 0 ? (
            <span>{Math.abs(m / 4)}</span>
          ) : m % 2 === 0 ? (
            <span className="h-[6px] w-px shrink-0 bg-[#8c8c8c]" />
          ) : (
            <span className="h-0.5 w-px shrink-0 bg-[#9c9c9c]" />
          )}
        </span>
      ))}
      <span className="w-0 grow-[24] basis-0" />
    </div>
  );
}

function VerticalRuler() {
  return (
    <div className="ml-[6px] flex w-[19px] shrink-0 flex-col border border-[#dcdcdc] bg-white text-base leading-4 text-[#4d4d4d]">
      <span className="h-0 grow-[60] basis-0" />
      {vMarks.map((m) => (
        <span key={m} className="flex h-0 min-h-0 grow-[100] basis-0 items-center justify-center">
          {m % 4 === 0 ? (
            <span className="rotate-180 [writing-mode:vertical-rl]">{Math.abs(m / 4)}</span>
          ) : m % 2 === 0 ? (
            <span className="h-px w-[6px] bg-[#8c8c8c]" />
          ) : (
            <span className="h-px w-0.5 bg-[#9c9c9c]" />
          )}
        </span>
      ))}
      <span className="h-0 grow-[60] basis-0" />
    </div>
  );
}

function Slide() {
  return (
    <div className="ml-[155px] flex grow gap-[15px] border border-[#c2c2c2] bg-white pt-[38px] pr-[87px] pb-[70px] pl-[88px] font-['Noto_Sans_CJK_JP',sans-serif] text-black [font-feature-settings:normal]">
      <div className="grow border border-dashed border-[#7a7a7a] pt-[6px] pr-[9px] [writing-mode:vertical-rl]">
        <ul>
          <li className="flex items-center gap-3 text-[37px] leading-[37px] font-light">
            <span className="mr-1 size-[9px] rounded-full bg-black" />
            テキストを入力
          </li>
        </ul>
      </div>
      <div className="w-[277px] shrink-0 border border-dashed border-[#7a7a7a] pt-1 pr-[104px] [writing-mode:vertical-rl]">
        <p className="text-[59px] leading-[59px] font-thin">タイトルを入力</p>
      </div>
    </div>
  );
}

function ScrollBar() {
  return (
    <div className="flex w-[22px] shrink-0 flex-col items-center">
      <div className="flex w-full grow flex-col items-center rounded-[10px] bg-[#f6f6f6] pt-[6px] pb-[6px]">
        <Icon w={11} h={9}>
          <path d="M5.500 0 11 8.500H0Z" fill="#6b6b6b" />
        </Icon>
        <div className="min-h-0 w-[10px] grow basis-0" />
        <div className="mb-[5px] h-[338px] w-[11px] rounded-full bg-[#6b6b6b]" />
        <Icon w={11} h={9}>
          <path d="M0 0h11L5.500 9Z" fill="#6b6b6b" />
        </Icon>
      </div>
      <div className="flex h-[66px] flex-col items-center gap-1 pt-[2px]">
        <button type="button" aria-label="前のスライド">
          <Icon w={12} h={16}>
            <path d="m6 0 6 8.500H9.500L12 15.500H0L2.500 8.500H0Z" fill="#6b6b6b" />
          </Icon>
        </button>
        <button type="button" aria-label="次のスライド">
          <Icon w={12} h={16}>
            <path d="M6 16 0 7.500h2.500L0 .5h12L9.500 7.500H12Z" fill="#6b6b6b" />
          </Icon>
        </button>
      </div>
    </div>
  );
}

function Workspace() {
  return (
    <main className="flex grow">
      <aside className="w-[291px] shrink-0 border-r border-[#d1d1d1] pt-6 text-lg">
        <div className="flex pl-4">
          <span className="w-[30px] leading-[14px]">1</span>
          <button type="button" aria-label="スライド 1" className="h-[124px] w-[220px] rounded-md border border-[#c2c2c2] bg-white" />
        </div>
        <div className="mt-[22px] flex pl-4 text-[#d24726]">
          <span className="w-[27px] leading-[18px]">2</span>
          <button type="button" aria-label="スライド 2" className="h-[130px] w-[226px] rounded-lg border-[3px] border-[#750b1c] bg-white" />
        </div>
      </aside>
      <div className="flex min-w-0 grow flex-col">
        <div className="flex grow">
          <div className="flex min-w-0 grow flex-col">
            <div className="-mr-[22px]">
              <HorizontalRuler />
            </div>
            <div className="mt-5 mr-[145px] mb-4 flex grow">
              <VerticalRuler />
              <Slide />
            </div>
          </div>
          <ScrollBar />
        </div>
        <div className="ml-0.5 flex h-[47px] items-center border-t border-[#d1d1d1] pb-2 pl-3">
          <input
            type="text"
            aria-label="ノート"
            placeholder="ノートを入力"
            className="w-full bg-transparent text-base outline-none placeholder:text-[#505050]"
          />
        </div>
      </div>
    </main>
  );
}

/* ---------- Status bar ---------- */

function StatusBar() {
  return (
    <footer className="border-t border-white bg-[#f4f4f4] text-[14px]">
      <div className="flex h-[25px] items-center whitespace-nowrap">
        <button type="button" className="ml-[15px] w-[97px] text-left">
          スライド 2/2
        </button>
        <IconButton label="スペル チェック" className="w-[18px]">
          <Icon w={18} h={18}>
            <path d="M9 15.500C7 14 4 14 1 14V2c3 0 6 0 8 1.500V15.500l2-2M9 3.500C11 2 14 2 17 2v8" stroke={ink} strokeWidth="1.200" />
            <path d="m9 13.500 3 3.500 5-6" stroke={ink} strokeWidth="1.200" />
          </Icon>
        </IconButton>
        <button type="button" className="ml-[21px] w-[65px] text-left text-[15px]">
          日本語
        </button>
        <button type="button" className="flex items-center gap-1 font-bold">
          <Icon w={19} h={19}>
            <circle cx="8.500" cy="3" r="2" stroke={ink} strokeWidth="1.200" />
            <path d="M8.500 17 7 18H4.500L6 11V8L1.500 6 2 3.500 7 6h3l5-2.500 1 2-4.500 2.500v3M10 11.500l8 7M18 11.500l-8 7" stroke={ink} strokeWidth="1.200" />
          </Icon>
          アクセシビリティ: 検討が必要です
        </button>
        <div className="ml-auto flex items-center">
          <button type="button" className="mr-[21px] flex items-center gap-0.5">
            <Icon w={20} h={20}>
              <path d="M6.500 5 10 1.500 13.500 5M0 9.500h20M0 14h20M0 18.500h20" stroke={ink} strokeWidth="1.300" />
            </Icon>
            ノート
          </button>
          <IconButton label="標準" className="h-[25px] w-[50px] bg-[#dedede]">
            <Icon w={18} h={16}>
              <path d="M1 1h16v14H1ZM4.500 1v14M4.500 12H17M8 4.500h6v4H8Z" stroke={ink} strokeWidth="1.300" />
            </Icon>
          </IconButton>
          <IconButton label="スライド一覧" className="w-[50px]">
            <Icon w={18} h={16}>
              <path d="M.7 1h6v5h-6ZM11 1h6v5h-6ZM.7 10h6v5h-6ZM11 10h6v5h-6Z" stroke={ink} strokeWidth="1.300" />
            </Icon>
          </IconButton>
          <IconButton label="閲覧表示" className="w-[50px]">
            <Icon w={17} h={17}>
              <path d="M8.500 15.500C6.500 14 4 14 .7 14V1.500c3 0 5.800 0 7.800 1.500 2-1.500 4.800-1.500 7.800-1.500V14c-3.300 0-5.800 0-7.800 1.500ZM8.500 3v12.500M3 5h3M3 8h3M3 11h3M11 5h3M11 8h3M11 11h3" stroke={ink} strokeWidth="1.300" />
            </Icon>
          </IconButton>
          <IconButton label="スライド ショー" className="w-[50px]">
            <Icon w={16} h={18}>
              <path d="M0 1.200h16M2 1.500V10h12V1.500M8 10v7M4 17h8M5.500 5.500h5" stroke={ink} strokeWidth="1.300" />
            </Icon>
          </IconButton>
          <IconButton label="縮小" className="ml-[2px] w-5">
            <Icon w={10} h={10}>
              <path d="M0 5h10" stroke="#262626" strokeWidth="1.200" />
            </Icon>
          </IconButton>
          <span className="relative mx-px flex h-5 w-[125px] items-center">
            <span className="absolute top-[6px] left-[62px] h-2 w-px bg-[#6b6b6b]" />
            <input
              type="range"
              aria-label="ズーム"
              min={0}
              max={100}
              defaultValue={40}
              className="h-px w-full appearance-none bg-[#6b6b6b] [&::-webkit-slider-thumb]:h-4 [&::-webkit-slider-thumb]:w-[6px] [&::-webkit-slider-thumb]:appearance-none [&::-webkit-slider-thumb]:bg-[#5f5f5f]"
            />
          </span>
          <IconButton label="拡大" className="w-5">
            <Icon w={10} h={10}>
              <path d="M0 5h10M5 0v10" stroke="#262626" strokeWidth="1.200" />
            </Icon>
          </IconButton>
          <button type="button" className="ml-[11px] w-[47px] text-left text-[15px]">
            80%
          </button>
          <IconButton label="現在のウィンドウの大きさに合わせてスライドを拡大または縮小します" className="mr-[6px] w-5">
            <Icon w={19} h={19}>
              <path d="M6 6h7v7H6ZM7 3.500 9.500 1 12 3.500M7 15.500 9.500 18l2.500-2.500M3.500 7 1 9.500 3.500 12M15.500 7 18 9.500 15.500 12" stroke={ink} strokeWidth="1.300" />
            </Icon>
          </IconButton>
        </div>
      </div>
      <div className="flex h-0.5 bg-[#454345]">
        <span className="ml-[60px] w-[360px] bg-[#c9c9c9]" />
      </div>
    </footer>
  );
}

export default function App() {
  return (
    <div className="flex min-h-screen flex-col bg-[#efefef] font-['Open_Sans','Noto_Sans_CJK_JP',sans-serif] text-[15px] text-[#262626] [font-feature-settings:'palt']">
      <TitleBar />
      <TabRow />
      <Ribbon />
      <Workspace />
      <StatusBar />
    </div>
  );
}
